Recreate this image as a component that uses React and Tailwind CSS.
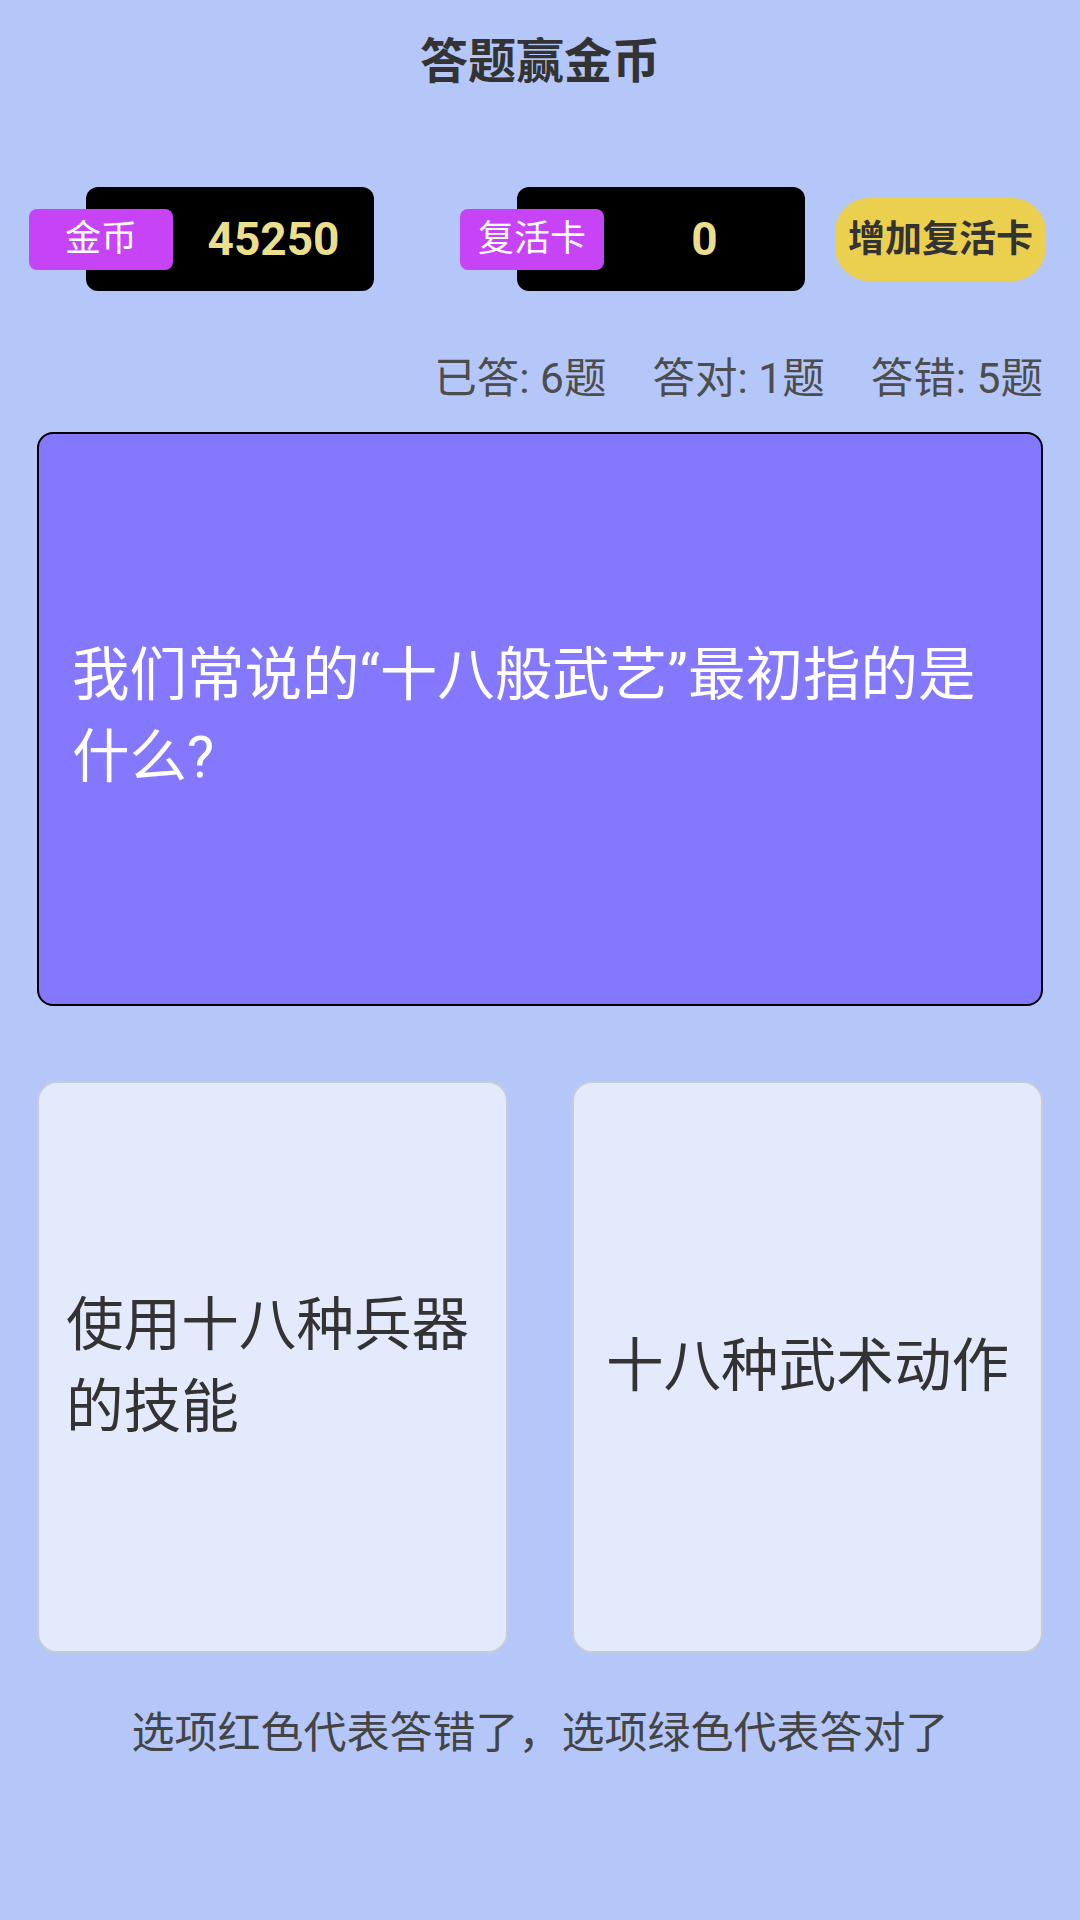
const stats = [
  { label: '已答', value: 6 },
  { label: '答对', value: 1 },
  { label: '答错', value: 5 },
]

const options = ['使用十八种兵器的技能', '十八种武术动作']

function Counter({ label, value }) {
  return (
    <div className="flex items-center">
      <div className="relative z-10 w-[144px] h-[61px] -mr-[87px] bg-[#c744f6] rounded-[8px] flex items-center justify-center text-white text-[36px] leading-none">
        {label}
      </div>
      <div className="w-[288px] h-[104px] pl-[87px] bg-black rounded-[12px] flex items-center justify-center text-[#ecdf8c] text-[46px] font-bold leading-none">
        {value}
      </div>
    </div>
  )
}

export default function App() {
  return (
    <div
      className="min-h-screen w-[1080px] bg-[#b4c7f8] flex flex-col"
      style={{ fontFamily: 'Roboto, "Noto Sans CJK SC", sans-serif' }}
    >
      {/* Header */}
      <h1 className="mt-[28px] h-[67px] leading-[67px] text-center text-[48px] font-bold text-[#333333]">
        答题赢金币
      </h1>

      {/* Coins / revive cards */}
      <div className="mt-[92px] pl-[29px] flex items-center">
        <Counter label="金币" value={45250} />
        <div className="ml-[86px]">
          <Counter label="复活卡" value={0} />
        </div>
        <button className="ml-[30px] w-[211px] h-[83px] rounded-[34px] bg-[#ebcf4f] text-[#333333] text-[37px] font-bold leading-none flex items-center justify-center">
          增加复活卡
        </button>
      </div>

      {/* Stats */}
      <div className="mt-[63px] pr-[37px] flex justify-end gap-[46px] text-[42.5px] leading-[50px] text-[#4d4d4d]">
        {stats.map((s) => (
          <span key={s.label}>
            {s.label}: {s.value}题
          </span>
        ))}
      </div>

      {/* Question */}
      <div className="mt-[28px] mx-[37px] h-[574px] bg-[#8478fe] border-2 border-black rounded-[16px] px-[33px] flex items-center">
        <p className="-mt-[4px] text-white text-[57.5px] leading-[82px]">
          我们常说的“十八般武艺”最初指的是什么?
        </p>
      </div>

      {/* Options */}
      <div className="mt-[75px] px-[37px] grid grid-cols-2 gap-[64px]">
        {options.map((opt) => (
          <div
            key={opt}
            className="h-[572px] bg-[#e3eafc] border-2 border-[#c6cbd8] rounded-[20px] px-[27px] flex items-center justify-center"
          >
            <p className="text-[#333333] text-[57.6px] leading-[82px]">{opt}</p>
          </div>
        ))}
      </div>

      {/* Footer hint */}
      <p className="mt-[55px] text-center text-[43px] leading-[50px] text-[#444444]">
        选项红色代表答错了，选项绿色代表答对了
      </p>
    </div>
  )
}
